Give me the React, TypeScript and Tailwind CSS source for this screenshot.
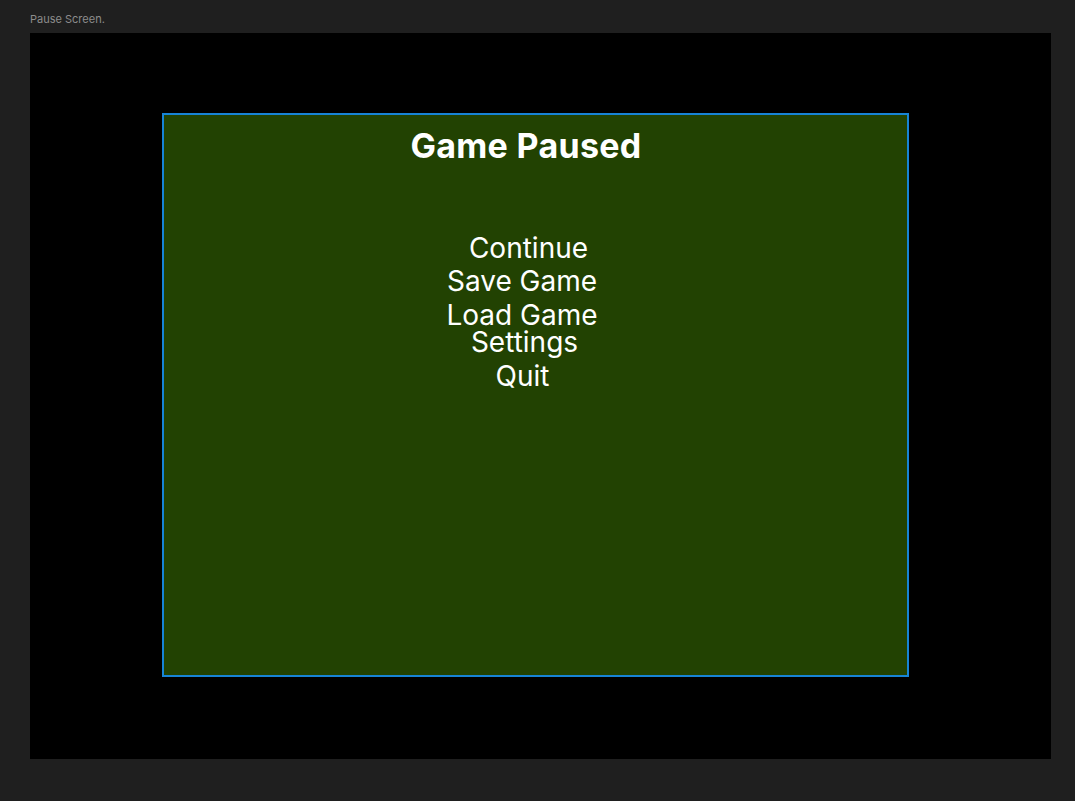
import React from 'react';

const menuItems = [
  { label: 'Continue', cls: 'mt-[71px] ml-[10px]' },
  { label: 'Save Game', cls: 'mt-[11px] mr-[3px]' },
  { label: 'Load Game', cls: 'mt-[12px] mr-[3px]' },
  { label: 'Settings', cls: 'mt-[5px] ml-[2px]' },
  { label: 'Quit', cls: 'mt-[12px] mr-[2px]' },
];

export default function App() {
  return (
    <div className="h-[801px] w-[1075px] bg-[#1f1f1f] pl-[30px] pt-[12px]" style={{ fontFamily: 'Inter, "Noto Sans", sans-serif' }}>
      <div className="text-[11px] leading-[14px] text-[#8c8c8c]">Pause Screen.</div>
      <div className="mt-[7px] h-[726px] w-[1021px] bg-black pl-[132px] pt-[80px]">
        <div className="flex h-[564px] w-[747px] flex-col items-center border-2 border-[#1784d6] bg-[#224202]">
          <h1 className="mr-[19px] mt-[11px] text-[34px] font-bold leading-[40px] tracking-[0.3px] text-white">Game Paused</h1>
          <div className="mr-[24px] flex flex-col items-center">
            {menuItems.map((item) => (
              <button key={item.label} className={`text-[28px] leading-[22px] text-white ${item.cls}`}>
                {item.label}
              </button>
            ))}
          </div>
        </div>
      </div>
    </div>
  );
}
